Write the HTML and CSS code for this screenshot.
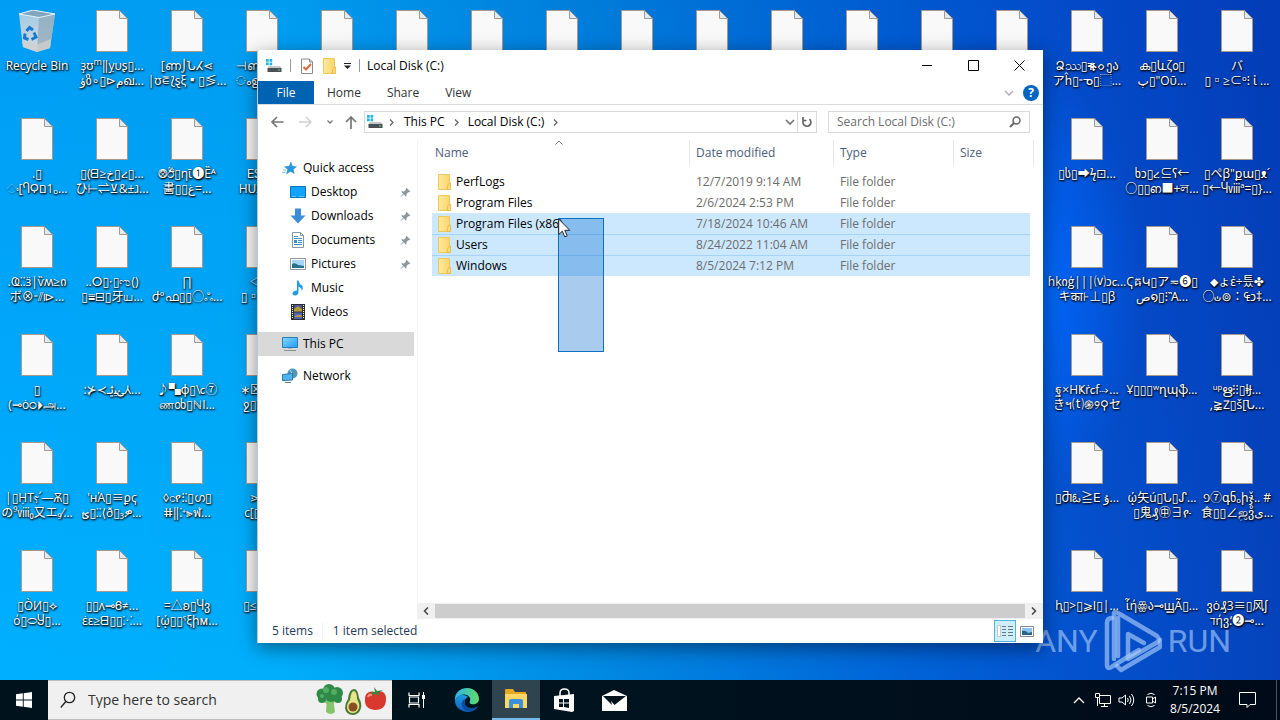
FILE: index.html
```html
<!DOCTYPE html>
<html lang="en">
<head>
<meta charset="utf-8">
<title>Local Disk (C:)</title>
<link rel="stylesheet" href="styles.css">
</head>
<body>
<svg class="defs" aria-hidden="true">
  <defs>
    <linearGradient id="g-folder" x1="0" x2="1"><stop offset="0" stop-color="#ffeaa0"/><stop offset="1" stop-color="#fbd568"/></linearGradient>
    <linearGradient id="g-screen" x1="0" y1="0" x2="1" y2="1"><stop offset="0" stop-color="#8ad8ff"/><stop offset="1" stop-color="#1d9cf0"/></linearGradient>
    <linearGradient id="g-bin" x1="0" y1="0" x2="0" y2="1"><stop offset="0" stop-color="#9fcbe6"/><stop offset="1" stop-color="#d3d9de"/></linearGradient>
    <linearGradient id="g-edge" x1="0" y1="0" x2="1" y2="0"><stop offset="0" stop-color="#2bb3ea"/><stop offset="1" stop-color="#5fdc6a"/></linearGradient>
    <linearGradient id="g-edge2" x1="0" y1="0" x2="0" y2="1"><stop offset="0" stop-color="#1b9de2"/><stop offset="1" stop-color="#0d5cb8"/></linearGradient>
  </defs>
  <symbol id="file" viewBox="0 0 32 42">
    <path d="M.5 .5H23.500L31.500 8.500V41.500H.5Z" fill="#f9f9f9" stroke="#a8988c"/>
    <path d="M23.500 .5V8.500H31.500Z" fill="#dcebf5" stroke="#a8988c"/>
  </symbol>
  <symbol id="folder" viewBox="0 0 16 16">
    <path d="M2.500 .5H13.500V15.500H2.500Z" fill="url(#g-folder)" stroke="#ecc85c"/>
    <path d="M12 10.500 14.500 9V15.500H11Z" fill="#fbdc78" stroke="#e4b53c" stroke-width=".8"/>
  </symbol>
  <symbol id="disk" viewBox="0 0 16 14">
    <path d="M0 0H2.700V2.700H0ZM3.500 0H6.200V2.700H3.500ZM0 3.500H2.700V6.200H0ZM3.500 3.500H6.200V6.200H3.500Z" fill="#22b5e0"/>
    <path d="M3 7H14L15.500 9H1.500Z" fill="#c4c8ca"/><path d="M1.500 9H15.500V13H1.500Z" fill="#4a5054"/><path d="M12 10.500h2v1h-2z" fill="#5fe070"/>
  </symbol>
  <symbol id="pin" viewBox="0 0 12 12">
    <path d="M7 .8 11.200 5 10 5.800 9 5.600 7 7.800 7.200 9.800 6.300 10.500 4 8 1 11 .6 10.700 3.300 7.400 1.300 5.300 2.200 4.600 4.200 4.800 6.400 3 6.200 1.800Z" fill="#8f979d"/>
  </symbol>
</svg>

<main class="desktop">
  <div class="icons">
    <ul class="col">
      <li class="item"><svg class="pic bin" viewBox="0 0 40 44">
        <path d="M2 4 16 0 38 4 33 38 20 42 6 37Z" fill="url(#g-bin)"/><path d="M22 7 38 4 33 38 20 42Z" fill="#8fa9ba" opacity=".75"/>
        <path d="M2 4 16 0 38 4 22 7.500Z" fill="#7fa6be" stroke="#e8f2f8" stroke-width="1"/><path d="M5 31 21 34 34 29 33 38 20 42 6 37Z" fill="#cfcfd0" opacity=".8"/>
        <g fill="none" stroke="#1779cf" stroke-width="3"><path d="M9.500 21 12.500 17.500 16 20"/><path d="M17 22.500 19 27 14.500 29.500"/><path d="M11.500 29.500 7.500 28 8 23.500"/></g></svg><span class="label">Recycle Bin</span></li>
      <li class="item"><svg class="pic"><use href="#file"/></svg><span class="label">.▯<br>ං[ႤϘם1ₒ...</span></li>
      <li class="item"><svg class="pic"><use href="#file"/></svg><span class="label">.Ҩ⁚⁚ӟ|ѷʍ≥ი<br>ボ⊗⁼⫽⧐...</span></li>
      <li class="item"><svg class="pic"><use href="#file"/></svg><span class="label">▯<br>(⊸ȯ੦⏵அ...</span></li>
      <li class="item"><svg class="pic"><use href="#file"/></svg><span class="label">|▯ḤTⲋ՛—Ѫ▯<br>の⁹ⅷ₀又エ₉⁄...</span></li>
      <li class="item"><svg class="pic"><use href="#file"/></svg><span class="label">▯ῸИ▯⟡<br>ό▯⬭Ⴘ▯...</span></li>
    </ul>
    <ul class="col">
      <li class="item"><svg class="pic"><use href="#file"/></svg><span class="label">ҙʊ<sup>m</sup>‖ỵυʂ▯...<br>ؤზ∘▯⊳مഖ...</span></li>
      <li class="item"><svg class="pic"><use href="#file"/></svg><span class="label">▯(ᗺ≥خ▯ረ▯...<br>ひ⊢⇌⊻&amp;±ג...</span></li>
      <li class="item"><svg class="pic"><use href="#file"/></svg><span class="label">..ⵔ▯⋅▯ಌ()<br>▯⩸⊟▯牙ய...</span></li>
      <li class="item"><svg class="pic"><use href="#file"/></svg><span class="label">:⊁≺ؿيؽ⅄...</span></li>
      <li class="item"><svg class="pic"><use href="#file"/></svg><span class="label">'ʜΆ▯≡ϼҁ<br>ؿ▯⁚⁚⟨ð▯₃ዎ...</span></li>
      <li class="item"><svg class="pic"><use href="#file"/></svg><span class="label">▯▯ʌ⊸Ꮾ≠...<br>ɛ̇ɛ≥ᗺ▯▯⁙...</span></li>
    </ul>
    <ul class="col">
      <li class="item"><svg class="pic"><use href="#file"/></svg><span class="label">[ണ⌡Նⵃ⋖<br>|ʊ⋷⟅ȿξ▪▯≶...</span></li>
      <li class="item"><svg class="pic"><use href="#file"/></svg><span class="label">⨷ඊ▯ηῑ❶Ȅᴬ<br>畵▯▯غ=...</span></li>
      <li class="item"><svg class="pic"><use href="#file"/></svg><span class="label">∏<br>ժ°ഫ▯▯◯ஃ...</span></li>
      <li class="item"><svg class="pic"><use href="#file"/></svg><span class="label">♪▚ɸ▯\ⲥ⑦<br>ண൦ხ▯ℕI...</span></li>
      <li class="item"><svg class="pic"><use href="#file"/></svg><span class="label">◊ငየ⁝⁚▯ഗ▯<br>ⵌ‖⁚⁺⫸ฬ...</span></li>
      <li class="item"><svg class="pic"><use href="#file"/></svg><span class="label">=△ʚ▯Ⴗვ<br>[ῴ▯▯ˤξիᴍ...</span></li>
    </ul>
    <ul class="col">
      <li class="item"><svg class="pic"><use href="#file"/></svg><span class="label">⊣ണ▯ʘ...<br>ംഉ⊛ω...</span></li>
      <li class="item"><svg class="pic"><use href="#file"/></svg><span class="label">ⴹᏚ▯...<br>HՍ⅃▯▯...</span></li>
      <li class="item"><svg class="pic"><use href="#file"/></svg><span class="label">◁▯▯<br>▯▫¬Ⴘ...</span></li>
      <li class="item"><svg class="pic"><use href="#file"/></svg><span class="label">∗⊠ⳅ▯...<br>ջ▯⁝苏...</span></li>
      <li class="item"><svg class="pic"><use href="#file"/></svg><span class="label">⋗⁚⁚ω<br>c[▯ஓ...</span></li>
      <li class="item"><svg class="pic"><use href="#file"/></svg><span class="label">▯≤ॐ▯▯</span></li>
    </ul>
    <ul class="col"><li class="item"><svg class="pic"><use href="#file"/></svg></li></ul>
    <ul class="col"><li class="item"><svg class="pic"><use href="#file"/></svg></li></ul>
    <ul class="col"><li class="item"><svg class="pic"><use href="#file"/></svg></li></ul>
    <ul class="col"><li class="item"><svg class="pic"><use href="#file"/></svg></li></ul>
    <ul class="col"><li class="item"><svg class="pic"><use href="#file"/></svg></li></ul>
    <ul class="col"><li class="item"><svg class="pic"><use href="#file"/></svg></li></ul>
    <ul class="col"><li class="item"><svg class="pic"><use href="#file"/></svg></li></ul>
    <ul class="col"><li class="item"><svg class="pic"><use href="#file"/></svg></li></ul>
    <ul class="col"><li class="item"><svg class="pic"><use href="#file"/></svg></li></ul>
    <ul class="col"><li class="item"><svg class="pic"><use href="#file"/></svg></li></ul>
    <ul class="col">
      <li class="item"><svg class="pic"><use href="#file"/></svg><span class="label">Ձဿ▯ቘᨔეა<br>アĥ▯⁼ᓀ▯⬚...</span></li>
      <li class="item"><svg class="pic"><use href="#file"/></svg><span class="label">▯ს▯➡ϟ⊡...</span></li>
      <li class="item"><svg class="pic"><use href="#file"/></svg><span class="label">ɦķიģ|||⒱ↄⲥ...<br>キका⊦⊥▯ꞵ</span></li>
      <li class="item"><svg class="pic"><use href="#file"/></svg><span class="label">ฐ×HҜṙⲥf⤑...<br>きฯ⒯֍୨⚲セ</span></li>
      <li class="item"><svg class="pic"><use href="#file"/></svg><span class="label">▯Ⴋఓ≧ⴹ ۇ...</span></li>
      <li class="item"><svg class="pic"><use href="#file"/></svg><span class="label">ⱨ▯&gt;▯⩾I▯|...</span></li>
    </ul>
    <ul class="col">
      <li class="item"><svg class="pic"><use href="#file"/></svg><span class="label">ക▯ևζ൦▯<br>پ▯"Oῡ...</span></li>
      <li class="item"><svg class="pic"><use href="#file"/></svg><span class="label">ხↄ▯ረ⊆ʕ←<br>○▯▯ഩ■+ল...</span></li>
      <li class="item"><svg class="pic"><use href="#file"/></svg><span class="label">ҀឝԿ▯ア≂❻▯<br>ص໑▯⁝Ἂ...</span></li>
      <li class="item"><svg class="pic"><use href="#file"/></svg><span class="label">Ұ▯▯▯ʷղպֆ...</span></li>
      <li class="item"><svg class="pic"><use href="#file"/></svg><span class="label">ῴ矢ú▯Ն▯ᔑ...<br>▯鬼₰㊥∃ዮ</span></li>
      <li class="item"><svg class="pic"><use href="#file"/></svg><span class="label">ἷήꙮა⊸ꚗÃ▯...</span></li>
    </ul>
    <ul class="col">
      <li class="item"><svg class="pic"><use href="#file"/></svg><span class="label">バ<br>▯▫≥⊂ᵒ⁝ ἰ ...</span></li>
      <li class="item"><svg class="pic"><use href="#file"/></svg><span class="label">▯ペꞵ"քա▯ᴥ´<br>▯←Ⴗⅷª=▯}...</span></li>
      <li class="item"><svg class="pic"><use href="#file"/></svg><span class="label">⬥ょἐ÷틌✤<br>○ഄ⊚∶₠ↄ‡...</span></li>
      <li class="item"><svg class="pic"><use href="#file"/></svg><span class="label">ᵘᵖഋ⁝⁝▯ⱡɈ...<br>,≩Ⴭ▯š[Ն...</span></li>
      <li class="item"><svg class="pic"><use href="#file"/></svg><span class="label">פ⑦գნₒիჯ̌.. #<br>食▯▯∠ஜვ̊ى...</span></li>
      <li class="item"><svg class="pic"><use href="#file"/></svg><span class="label">ვȯ₰3≡▯风ʃ<br>ℸήვ⸵❷⊸...</span></li>
    </ul>
  </div>

  <div class="watermark"><span>ANY</span>
    <svg viewBox="0 0 58 64"><g fill="none" stroke="currentColor" stroke-width="4.500" stroke-linejoin="round" stroke-linecap="round">
      <path d="M10 50V5Q10 1 14 4L53 27Q57 31 52 34L24 50V25L40 34"/><path d="M8 9Q3 9 3 14V57Q4 61 9 57L35 41"/><path d="M14 9V47"/><path d="M13 57 17 61 56 38V31"/></g></svg>
    <span>RUN</span></div>

  <section class="window" aria-label="Local Disk (C:)">
    <header class="titlebar">
      <svg class="t-disk" viewBox="0 0 16 14"><use href="#disk"/></svg>
      <span class="sep"></span>
      <button class="quick" aria-label="Properties"><svg width="14" height="16" viewBox="0 0 14 16"><path d="M1.500 1H9.500L12.500 4V15.500H1.500Z" fill="#fff" stroke="#8a8a8a"/><path d="M9.500 1V4H12.500" fill="none" stroke="#8a8a8a"/><path d="M3.500 9 6 11.500 11 6" fill="none" stroke="#d9683c" stroke-width="2"/></svg></button>
      <button class="quick" aria-label="New folder"><svg width="16" height="16"><use href="#folder"/></svg></button>
      <button class="quick more" aria-label="Customize"><svg width="7" height="6" viewBox="0 0 7 6"><path d="M0 0H7V1H0ZM0 2.500H7L3.500 6Z" fill="#222"/></svg></button>
      <span class="sep"></span>
      <h1>Local Disk (C:)</h1>
      <div class="controls">
        <button aria-label="Minimize"><svg width="11" height="11"><path d="M0 5.500H10" stroke="#000"/></svg></button>
        <button aria-label="Maximize"><svg width="11" height="11"><path d="M.5 .5H10.500V10.500H.5Z" fill="none" stroke="#000"/></svg></button>
        <button aria-label="Close"><svg width="11" height="11"><path d="M.5 .5 10.500 10.500M10.500 .5 .5 10.500" stroke="#000"/></svg></button>
      </div>
    </header>
    <nav class="ribbon">
      <button class="file">File</button><button>Home</button><button>Share</button><button>View</button>
      <span class="grow"></span>
      <button class="expand" aria-label="Expand ribbon"><svg width="10" height="6"><path d="M1 1 5 5 9 1" fill="none" stroke="#aaa" stroke-width="1.300"/></svg></button>
      <button class="help" aria-label="Help">?</button>
    </nav>
    <div class="address">
      <button class="back" aria-label="Back"><svg width="13" height="12"><path d="M1 6H12.500M6 1 1 6 6 11" fill="none" stroke="#777" stroke-width="1.700"/></svg></button>
      <button class="forward" aria-label="Forward"><svg width="13" height="12"><path d="M0 6H12M7 1 12 6 7 11" fill="none" stroke="#d0d0d0" stroke-width="1.500"/></svg></button>
      <button class="recent" aria-label="Recent"><svg width="6" height="4"><path d="M.5 .5 3 3 5.500 .5" fill="none" stroke="#777" stroke-width="1.300"/></svg></button>
      <button class="up" aria-label="Up"><svg width="12" height="13"><path d="M6 1V13M1 6 6 1 11 6" fill="none" stroke="#777" stroke-width="1.700"/></svg></button>
      <div class="path">
        <svg class="t-disk" viewBox="0 0 16 14"><use href="#disk"/></svg>
        <svg class="chev" viewBox="0 0 5 7"><path d="M1 .5 4 3.500 1 6.500" fill="none" stroke="#666" stroke-width="1.300"/></svg>
        <button>This PC</button>
        <svg class="chev" viewBox="0 0 5 7"><path d="M1 .5 4 3.500 1 6.500" fill="none" stroke="#666" stroke-width="1.300"/></svg>
        <button>Local Disk (C:)</button>
        <svg class="chev" viewBox="0 0 5 7"><path d="M1 .5 4 3.500 1 6.500" fill="none" stroke="#666" stroke-width="1.300"/></svg>
        <span class="grow"></span>
        <button class="drop" aria-label="Previous locations"><svg width="10" height="7"><path d="M1 1 5 5 9 1" fill="none" stroke="#777" stroke-width="1.700"/></svg></button>
        <button class="refresh" aria-label="Refresh"><svg width="12" height="12"><path d="M3 3.500A4 4 0 1 0 8.500 3.200M2 1V4.500H5.500" fill="none" stroke="#666" stroke-width="1.700"/></svg></button>
      </div>
      <label class="search"><input type="text" aria-label="Search Local Disk (C:)" placeholder="Search Local Disk (C:)"><svg width="12" height="12"><circle cx="7.500" cy="4.500" r="3.500" fill="none" stroke="#666" stroke-width="1.500"/><path d="M5 7 1 11" stroke="#666" stroke-width="2"/></svg></label>
    </div>
    <div class="body">
      <ul class="tree">
        <li><a href="#" class="top"><svg viewBox="0 0 16 16"><path d="M9 1.500 10.500 6 15 6.500 11.500 9.500 12.500 14 8.500 11.500 4 14.500 5.500 9.500 2 6.500 7 6Z" fill="#2996e0"/><path d="M1 10H4M0 12.500H3.500" stroke="#7fc3ee"/></svg>Quick access</a></li>
        <li><a href="#"><svg viewBox="0 0 16 16"><path d="M.5 2.500H15.500V13.500H.5Z" fill="#12a3fb" stroke="#0874be"/><path d="M2 12.500H6M9 12.500H14" stroke="#5cc8ff"/></svg>Desktop<svg class="pin"><use href="#pin"/></svg></a></li>
        <li><a href="#"><svg viewBox="0 0 16 16"><path d="M5 .5H11V7.500H15.500L8 15.500 .5 7.500H5Z" fill="#3b8dd8"/></svg>Downloads<svg class="pin"><use href="#pin"/></svg></a></li>
        <li><a href="#"><svg viewBox="0 0 16 16"><path d="M2.500 .5H10.500L13.500 3.500V15.500H2.500Z" fill="#fff" stroke="#8796a3"/><path d="M10.500 .5V3.500H13.500" fill="none" stroke="#8796a3"/><path d="M4 4.500H8M4 6.500H12M8 8.500H12M8 10.500H12M4 12.500H12" stroke="#3d8dca"/><path d="M4 8H7V11H4Z" fill="#3d8dca"/></svg>Documents<svg class="pin"><use href="#pin"/></svg></a></li>
        <li><a href="#"><svg viewBox="0 0 16 16"><path d="M.5 2.500H15.500V13.500H.5Z" fill="#fff" stroke="#8b98a5"/><path d="M2 4H14V12H2Z" fill="#a6d4f3"/><path d="M2 8Q5 6 8 9L14 10V12H2Z" fill="#28708c"/></svg>Pictures<svg class="pin"><use href="#pin"/></svg></a></li>
        <li><a href="#"><svg viewBox="0 0 16 16"><path d="M7 .5H8.500Q9 4 12 5.500 14 8 11.500 11 12 7.500 8.500 6.500V12Q8 15.500 5 15.500 2.500 15.500 2.500 13 3 10.500 7 10.500Z" fill="#1e9bed"/></svg>Music</a></li>
        <li><a href="#"><svg viewBox="0 0 16 16"><path d="M1 0H15V16H1Z" fill="#2d2d2d"/><path d="M4 1H12V7.500H4Z" fill="#4c569c"/><path d="M4 8.500H12V15H4Z" fill="#4d64b8"/><path d="M4 5 8 2 12 5V7.500H4ZM4 13Q8 9 12 12V13Z" fill="#b49b39"/><path d="M2.500 1V15M13.500 1V15" stroke="#fff" stroke-dasharray="1 1"/></svg>Videos</a></li>
        <li class="spaced"><a href="#" class="top current"><svg viewBox="0 0 16 16"><path d="M.5 1.500H15.500V11.500H.5Z" fill="url(#g-screen)" stroke="#277fb8"/><path d="M2 14.500H14" stroke="#87929b"/><path d="M6 12H10V13H6Z" fill="#aeb7be"/></svg>This PC</a></li>
        <li class="spaced"><a href="#" class="top"><svg viewBox="0 0 16 16"><circle cx="10.500" cy="5.500" r="5" fill="#5294b4"/><path d="M8 2Q11 5 9 8" fill="none" stroke="#a6d9e8"/><path d="M.5 6.500 10.500 5.500V12L.5 12.500Z" fill="#4db4ee" stroke="#2879ae"/><path d="M3 14.500H9" stroke="#6e8391"/></svg>Network</a></li>
      </ul>
      <div class="content">
        <svg class="sort" width="8" height="5"><path d="M.5 4.500 4 1 7.500 4.500" fill="none" stroke="#777"/></svg>
        <div class="listing">
          <table>
            <colgroup><col class="c-name"><col class="c-date"><col class="c-type"><col class="c-size"></colgroup>
            <thead><tr><th>Name</th><th>Date modified</th><th>Type</th><th>Size</th></tr></thead>
            <tbody>
              <tr><td><svg><use href="#folder"/></svg>PerfLogs</td><td>12/7/2019 9:14 AM</td><td>File folder</td><td></td></tr>
              <tr><td><svg><use href="#folder"/></svg>Program Files</td><td>2/6/2024 2:53 PM</td><td>File folder</td><td></td></tr>
              <tr class="on"><td><svg><use href="#folder"/></svg>Program Files (x86)</td><td>7/18/2024 10:46 AM</td><td>File folder</td><td></td></tr>
              <tr class="on"><td><svg><use href="#folder"/></svg>Users</td><td>8/24/2022 11:04 AM</td><td>File folder</td><td></td></tr>
              <tr class="on"><td><svg><use href="#folder"/></svg>Windows</td><td>8/5/2024 7:12 PM</td><td>File folder</td><td></td></tr>
            </tbody>
          </table>
        </div>
        <div class="marquee"></div>
        <div class="scrollbar"><button aria-label="Scroll left"><svg width="6" height="8"><path d="M5 .5 1.500 4 5 7.500" fill="none" stroke="#444" stroke-width="1.500"/></svg></button><span class="thumb"></span><button aria-label="Scroll right"><svg width="6" height="8"><path d="M1 .5 4.500 4 1 7.500" fill="none" stroke="#444" stroke-width="1.500"/></svg></button></div>
      </div>
    </div>
    <footer class="status"><span>5 items</span><span>1 item selected</span><span class="grow"></span>
      <button class="active" aria-label="Details"><svg width="16" height="14"><path d="M.5 1.500H3.500V12.500H.5Z" fill="#fff" stroke="#a9a08a" stroke-dasharray="1 1"/><path d="M5 2.500H9M11 2.500H16M5 5.500H9M11 5.500H16M5 8.500H9M11 8.500H16M5 11.500H9M11 11.500H16" stroke="#66787d"/></svg></button>
      <button aria-label="Large icons"><svg width="14" height="11"><path d="M.5 .5H13.500V10.500H.5Z" fill="#fff" stroke="#7f8c99"/><path d="M2 2H12V9H2Z" fill="#8cc4ef"/><path d="M2 5Q6 4 8 7L12 6V9H2Z" fill="#2c6288"/></svg></button>
    </footer>
  </section>

  <svg class="cursor" width="13" height="20" viewBox="0 0 13 20"><path d="M.7 1V16.500L4.300 13.200 6.800 18.800 9.200 17.800 6.800 12.300H11.800Z" fill="#fff" stroke="#222"/></svg>
</main>

<footer class="taskbar">
  <button class="start" aria-label="Start"><svg width="16" height="16"><path d="M0 2.300 6.800 1.300V7.500H0ZM7.700 1.200 16 0V7.500H7.700ZM0 8.400H6.800V14.700L0 13.700ZM7.700 8.400H16V16L7.700 14.800Z" fill="#fff"/></svg></button>
  <label class="find">
    <svg width="16" height="18"><circle cx="9.500" cy="6.500" r="5.200" fill="none" stroke="#222" stroke-width="1.300"/><path d="M5.800 10.500 .8 16.500" stroke="#222" stroke-width="1.300"/></svg>
    <input type="text" aria-label="Type here to search" placeholder="Type here to search">
    <svg class="veg" width="72" height="32" viewBox="0 0 72 32">
      <path d="M11 13H17L19 28Q15 32 10 28Z" fill="#83c46d"/><path d="M12 19 6 14M16 19 21 14" stroke="#83c46d" stroke-width="3"/>
      <g fill="#2f8a47"><circle cx="6" cy="10" r="5.500"/><circle cx="13" cy="6" r="6"/><circle cx="21" cy="9" r="6"/><circle cx="15" cy="12" r="6"/><circle cx="22" cy="15" r="4"/><circle cx="6" cy="15" r="4"/></g><g fill="#4fae62"><circle cx="10" cy="6" r="3"/><circle cx="18" cy="8" r="3"/><circle cx="6" cy="12" r="2"/></g>
      <path d="M38 5Q42 5 43 14 46 19 45 24 43 31 37 31 30 31 29 24 29 19 32 15 33 5 38 5Z" fill="#487b35"/><path d="M38 7Q41 8 41 15 44 20 43 24 41 29 37 29 32 29 31 24 31 19 34 16 35 7 38 7Z" fill="#e7e58a"/><circle cx="37" cy="23" r="4.500" fill="#8b4f26"/>
      <path d="M59 8Q70 5 70 15 70 26 59 26 48 25 49 15 49 6 59 8Z" fill="#d8382d"/><path d="M52 7 59 8 58 3 61 7 67 6 62 9 64 12 59 10 54 11 56 8Z" fill="#3b8440"/><path d="M52 13Q53 10 56 11" stroke="#ff9082" fill="none" stroke-width="2"/>
    </svg>
  </label>
  <div class="apps">
    <button class="task-view" aria-label="Task View"><svg width="18" height="16"><path d="M1 .5V3.500H11V.5M1 15.500V12.500H11V15.500M1.500 5H10.500V11H1.500Z" fill="none" stroke="#fff" stroke-width="1.200"/><path d="M15.500 0V16" stroke="#fff"/><path d="M14 3H17V7H14Z" fill="#fff"/></svg></button>
    <button aria-label="Microsoft Edge"><svg width="26" height="26" viewBox="0 0 26 26"><path d="M1 14C0 5 7 1 13 1 21 1 25 7 25 12 25 16 21 18 17 17 14 16 17 14 16 11 13 5 4 7 1 14Z" fill="url(#g-edge)"/><path d="M1 14C4 7 11 7 14 10 9 12 9 20 16 22 19 23 22 21 24 19 21 25 14 26 9 24 3 22 1 17 1 14Z" fill="url(#g-edge2)"/><path d="M11 12C9 18 14 23 23 20 18 26 10 25 8 19 7 16 9 13 11 12Z" fill="#0b4b9c"/></svg></button>
    <button class="active" aria-label="File Explorer"><svg width="22" height="20" viewBox="0 0 22 20"><path d="M0 1Q0 0 1 0H8L10 3H21V19H0Z" fill="#e6a722"/><path d="M0 5H22V19H0Z" fill="#ffd764"/><path d="M4 19V12Q4 10 6 10H16Q18 10 18 12V19H14V15H8V19Z" fill="#3b91d9"/></svg></button>
    <button aria-label="Store"><svg width="22" height="25" viewBox="0 0 22 25"><path d="M6 8V5Q6 1 10.500 1 15 1 15 5V7" fill="none" stroke="#fff" stroke-width="1.500"/><path d="M0 8 20 6V23L18 24 0 21Z" fill="#fff"/><path d="M5 11H9V14.500H5ZM10 11H15V14.500H10ZM5 15.500H9V19H5ZM10 15.500H15V20L10 19Z" fill="#00131c"/></svg></button>
    <button aria-label="Mail"><svg width="25" height="21" viewBox="0 0 25 21"><path d="M0 6 12 0 25 6V21H0Z" fill="#fff"/><path d="M1 6H24L12.500 15 9 11 10 15Z" fill="#00131c"/></svg></button>
  </div>
  <span class="grow"></span>
  <div class="tray">
    <button aria-label="Show hidden icons"><svg width="12" height="8"><path d="M1 7 6 2 11 7" fill="none" stroke="#fff" stroke-width="1.300"/></svg></button>
    <button aria-label="Network"><svg width="16" height="15"><path d="M5 2.500H15.500V10.500H4.500V5M9.500 11V13M6 13.500H13M.5 .5H4.500V4.500H.5ZM2.500 5V13" fill="none" stroke="#fff"/></svg></button>
    <button aria-label="Volume"><svg width="18" height="14"><path d="M1 5H4L7.500 2V12L4 9H1Z" fill="none" stroke="#fff"/><path d="M9.500 5Q11 7 9.500 9M11.500 3Q14.500 7 11.500 11M13.500 1Q18 7 13.500 13" fill="none" stroke="#fff"/></svg></button>
    <button aria-label="Meet Now"><svg width="12" height="16"><path d="M1.500 5H7.500V11H1.500ZM7.500 7 10.500 5V11L7.500 9M2.500 2.500Q6 0 9.500 2.500M2.500 13.500Q6 16 9.500 13.500" fill="none" stroke="#fff"/></svg></button>
  </div>
  <time class="clock">7:15 PM<br>8/5/2024</time>
  <button class="notify" aria-label="Notifications"><svg width="17" height="17"><path d="M.5 .5H16.500V12.500H11L8 15.500V12.500H.5Z" fill="none" stroke="#fff"/></svg></button>
  <button class="peek" aria-label="Show desktop"></button>
</footer>
</body>
</html>
```
FILE: styles.css
```css
* { box-sizing: border-box; }
body {
  margin: 0;
  height: 100vh;
  display: flex;
  flex-direction: column;
  overflow: hidden;
  font: 12px/16px "Open Sans", "Noto Sans", "Noto Sans CJK SC", "DejaVu Sans", sans-serif;
  color: #000;
}
button { font: inherit; color: inherit; background: none; border: 0; padding: 0; margin: 0; display: flex; align-items: center; justify-content: center; white-space: nowrap; }
input { font: inherit; border: 0; background: none; padding: 0; min-width: 0; flex: 1; outline: 0; }
ul { list-style: none; margin: 0; padding: 0; }
svg { flex: none; display: block; }
.defs { position: absolute; width: 0; height: 0; }
.grow { flex: 1; }

.desktop {
  position: relative;
  flex: 1;
  min-height: 0;
  background:
    radial-gradient(ellipse 120px 220px at 80% 42%, #006aff 0, rgba(0, 96, 245, 0) 100%),
    linear-gradient(to bottom, rgba(0, 60, 180, .15), rgba(0, 200, 255, .05)),
    linear-gradient(to right, #00aeff 0, #00adfb 22%, #0084e0 48%, #005cd4 72%, #044ccc 84%, #043cb8 100%);
}
.icons { display: flex; gap: 1px; }
.col { width: 74px; flex: none; }
.item { height: 108px; padding-top: 10px; display: flex; flex-direction: column; align-items: center; }
.pic { width: 32px; height: 42px; }
.bin { width: 40px; height: 44px; margin-bottom: -2px; }
.label {
  margin-top: 6px;
  line-height: 15px;
  height: 30px;
  color: #fff;
  text-align: center;
  white-space: nowrap;
  direction: ltr;
  unicode-bidi: bidi-override;
  text-shadow: 0 1px 2px #000, 1px 1px 2px #000;
}
.label sup { font-size: 9px; line-height: 8px; }

.watermark {
  position: absolute;
  right: 49px;
  bottom: 7px;
  display: flex;
  align-items: center;
  gap: 6px;
  color: rgba(170, 205, 250, .65);
  font: 32px/48px Roboto, "Liberation Sans", sans-serif;
}
.watermark svg { width: 58px; height: 64px; }

.window {
  position: absolute;
  left: 257px;
  right: 237px;
  top: 50px;
  bottom: 37px;
  display: flex;
  flex-direction: column;
  background: #fff;
  border-left: 1px solid #b4cbd8;
  box-shadow: 0 5px 18px rgba(0, 0, 0, .45);
}
.titlebar { display: flex; align-items: center; height: 31px; padding: 0 1px 0 8px; }
.t-disk { width: 16px; height: 14px; }
.sep { width: 1px; height: 13px; background: #999; margin: 0 8px; }
.sep + h1 { margin-left: -1px; }
.quick { width: 16px; height: 20px; margin-right: 6px; }
.quick.more { width: 8px; margin-right: 0; }
h1 { font: inherit; margin: 0; }
.controls { display: flex; margin-left: auto; }
.controls button { width: 46px; height: 30px; }

.ribbon { display: flex; align-items: stretch; height: 24px; border-bottom: 1px solid #dadbdc; color: #333; }
.ribbon button { padding: 0 13px; }
.ribbon .file { width: 56px; padding: 0; background: #0063b1; color: #fff; }
.ribbon .expand { padding: 0 9px; }
.ribbon .help { width: 16px; height: 16px; align-self: center; margin-right: 4px; padding: 0; border-radius: 50%; background: #0067c0; color: #fff; font-weight: 700; }

.address { display: flex; align-items: center; height: 34px; margin-bottom: 1px; padding: 0 13px 0 12px; }
.back { width: 14px; margin-right: 14px; }
.forward { width: 14px; margin-right: 14px; }
.recent { width: 8px; margin-right: 10px; }
.up { width: 14px; margin-right: 6px; }
.path { flex: 1; display: flex; align-items: center; height: 22px; border: 1px solid #d9d9d9; padding-left: 2px; }
.path button { padding: 0 4px; }
.chev { width: 5px; height: 7px; margin: 0 6px; }
.chev ~ .chev { margin: 0 5px; }
.path .drop { width: 14px; padding: 0; }
.path .refresh { width: 19px; height: 20px; padding: 0; border-left: 1px solid #d9d9d9; }
.search { width: 202px; height: 22px; margin-left: 11px; padding: 0 8px; border: 1px solid #d9d9d9; display: flex; align-items: center; }
.search input::placeholder { color: #6d6d6d; opacity: 1; }

.body { flex: 1; min-height: 0; display: flex; }
.tree { width: 160px; padding: 16px 3px 0 0; border-right: 1px solid #f2f2f2; }
.tree a { display: flex; align-items: center; gap: 5px; height: 24px; padding: 0 3px 0 32px; color: #000; text-decoration: none; }
.tree a.top { padding-left: 24px; }
.tree a.current { background: #d9d9d9; }
.tree svg { width: 16px; height: 16px; }
.tree .pin { width: 11px; height: 11px; margin-left: auto; }
.spaced { margin-top: 8px; }

.content { position: relative; flex: 1; min-width: 0; display: flex; flex-direction: column; }
.listing { flex: 1; min-height: 0; overflow: hidden; padding: 0 9px 0 14px; }
table { width: 100%; table-layout: fixed; border-collapse: separate; border-spacing: 0; }
.c-name { width: 258px; }
.c-date { width: 144px; }
.c-type { width: 120px; }
th { height: 26px; padding: 0 0 0 6px; border-right: 1px solid #e8e8e8; font-weight: 400; text-align: left; color: #4c607a; }
th:first-child { padding-left: 3px; }
thead::after { content: ""; display: block; height: 5px; }
td { height: 21px; padding: 0 0 0 6px; color: #6d6d6d; white-space: nowrap; line-height: 16px; }
td:first-child { color: #000; padding-left: 4px; }
td:last-child { border-right: 4px solid #fff; }
td svg { display: inline-block; width: 16px; height: 16px; margin-right: 4px; vertical-align: top; }
.on td { background: #cce8ff; }
.on + .on td { box-shadow: inset 0 1px #a6d4f8; }
.sort { position: absolute; left: 137px; top: 0; }
.marquee { position: absolute; left: 140px; top: 78px; width: 46px; height: 134px; border: 1px solid #0e70c0; background: rgba(0, 102, 204, .34); }
.scrollbar { display: flex; height: 16px; padding-right: 1px; background: #f0f0f0; }
.scrollbar button { width: 16px; }
.thumb { flex: 1; margin: 1px; background: #cdcdcd; }

.status { display: flex; align-items: center; height: 24px; padding: 0 5px 0 14px; color: #1e395b; }
.status span + span { margin-left: 9px; padding-left: 10px; border-left: 1px solid #f0f0f0; }
.status .grow { border: 0; }
.status button { width: 22px; height: 22px; }
.status .active { background: #cdeefa; border: 1px solid #4fb5da; }

.cursor { position: absolute; left: 558px; top: 218px; }

.taskbar { flex: none; display: flex; align-items: stretch; height: 40px; color: #fff; background: linear-gradient(to right, #00131c, #00131e 50%, #000a18); }
.start { width: 48px; }
.find { width: 344px; display: flex; align-items: center; padding: 0 4px 0 12px; background: #f0f0f0; border: 1px solid #bcbcbc; border-width: 1px 0; }
.find input { margin-left: 12px; font-size: 14px; color: #333; }
.find input::placeholder { color: #333; opacity: 1; }
.apps { display: flex; gap: 1px; }
.apps button { width: 48px; }
.apps .task-view { width: 50px; }
.apps .active { background: #2f444e; border-bottom: 2px solid #76b9ed; }
.tray { display: flex; }
.tray button { width: 24px; }
.clock { width: 64px; padding-top: 2px; text-align: center; line-height: 18px; }
.notify { width: 40px; margin-right: 9px; }
.peek { width: 4px; border-left: 1px solid #4a5260; }
```
